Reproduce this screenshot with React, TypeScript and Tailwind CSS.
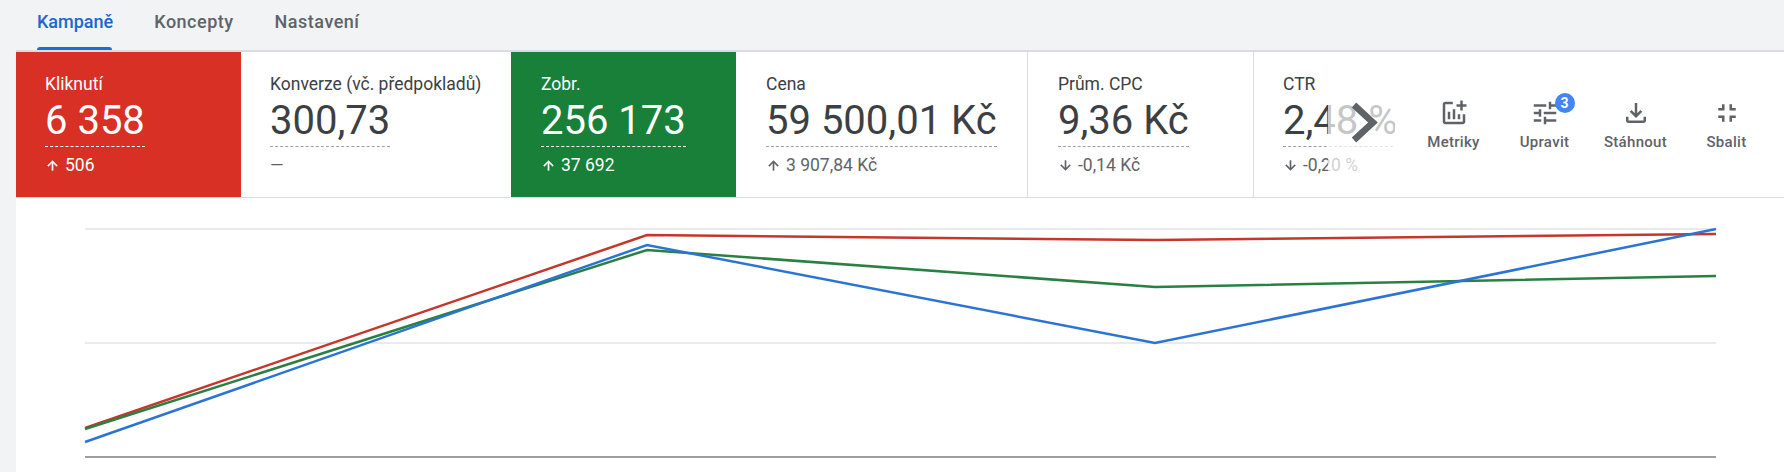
const UP = 'M4 12l1.41 1.41L11 7.83V20h2V7.83l5.58 5.59L20 12l-8-8-8 8z';
const DOWN = 'M20 12l-1.41-1.41L13 16.17V4h-2v12.17l-5.58-5.59L4 12l8 8 8-8z';

const CARDS = [
  { label: 'Kliknutí', value: '6 358', arrow: UP, sub: '506', width: 'w-[225px] pl-[29px]', tone: 'bg-[#d93025] text-white', line: 'border-white', subTone: 'text-white' },
  { label: 'Konverze (vč. předpokladů)', value: '300,73', arrow: '', sub: '—', width: 'w-[270px] pl-[29px]', tone: 'bg-white text-[#3c4043]', line: 'border-[#9aa0a6]', subTone: 'text-[#5f6368]' },
  { label: 'Zobr.', value: '256 173', arrow: UP, sub: '37 692', width: 'w-[225px] pl-[30px]', tone: 'bg-[#188038] text-white', line: 'border-white', subTone: 'text-white' },
  { label: 'Cena', value: '59 500,01 Kč', arrow: UP, sub: '3 907,84 Kč', width: 'w-[292px] pl-[30px] border-r border-[#dadce0]', tone: 'bg-white text-[#3c4043]', line: 'border-[#9aa0a6]', subTone: 'text-[#5f6368]' },
  { label: 'Prům. CPC', value: '9,36 Kč', arrow: DOWN, sub: '-0,14 Kč', width: 'w-[226px] pl-[30px] border-r border-[#dadce0]', tone: 'bg-white text-[#3c4043]', line: 'border-[#9aa0a6]', subTone: 'text-[#5f6368]' },
  { label: 'CTR', value: '2,48 %', arrow: DOWN, sub: '-0,20 %', width: 'flex-1 pl-[29px]', tone: 'bg-white text-[#3c4043]', line: 'border-[#9aa0a6]', subTone: 'text-[#5f6368]' },
];

const ACTIONS = [
  { label: 'Metriky', d: 'M22 5v2h-3v3h-2V7h-3V5h3V2h2v3h3zm-3 14H5V5h6V3H5c-1.1 0-2 .9-2 2v14c0 1.1.9 2 2 2h14c1.1 0 2-.9 2-2v-6h-2v6zm-4-6v4h2v-4h-2zm-4 4h2V9h-2v8zm-2 0v-6H7v6h2z' },
  { label: 'Upravit', d: 'M3 17v2h6v-2H3zM3 5v2h10V5H3zm10 16v-2h8v-2h-8v-2h-2v6h2zM7 9v2H3v2h4v2h2V9H7zm14 4v-2H11v2h10zm-6-4h2V7h4V5h-4V3h-2v6z', badge: '3' },
  { label: 'Stáhnout', d: 'M18 15v3H6v-3H4v3c0 1.1.9 2 2 2h12c1.1 0 2-.9 2-2v-3h-2zm-1-4l-1.41-1.41L13 12.17V4h-2v8.17L8.41 9.59 7 11l5 5 5-5z' },
  { label: 'Sbalit', d: 'M5 16h3v3h2v-5H5v2zm3-8H5v2h5V5H8v3zm6 11h2v-3h3v-2h-5v5zm2-11V5h-2v5h5V8h-3z' },
];

export default function App() {
  return (
    <div className="h-[472px] overflow-hidden bg-[#f1f3f4] pl-4 font-['Roboto',sans-serif]">
      {/* tabs */}
      <div className="flex h-[52px] gap-[41px] border-b-2 border-[#dadce0] pl-[21px] text-[18px] font-medium tracking-[0.5px] text-[#5f6368]">
        <div className="relative pt-[8px] tracking-normal text-[#1967d2]">
          Kampaně
          <div className="absolute bottom-0 left-0 h-[3px] w-[75px] rounded-t-[3px] bg-[#1a6fd4]" />
        </div>
        <div className="pt-[8px]">Koncepty</div>
        <div className="pt-[8px]">Nastavení</div>
      </div>

      {/* scorecards */}
      <div className="relative flex h-[146px] border-b border-[#dadce0] bg-white">
        {CARDS.map((c) => (
          <div key={c.label} className={`${c.width} ${c.tone} pt-[20px]`}>
            <div className="text-[17.5px] leading-6">{c.label}</div>
            <div className={`inline-block border-b border-dashed ${c.line} text-[40px] leading-[50px]`}>{c.value}</div>
            <div className={`mt-2 flex items-center text-[17.5px] leading-5 ${c.subTone}`}>
              {c.arrow && (
                <svg className="mr-[5px] h-[15px] w-[15px]" viewBox="0 0 24 24" fill="currentColor" stroke="currentColor" strokeWidth="0.6">
                  <path d={c.arrow} />
                </svg>
              )}
              {c.sub}
            </div>
          </div>
        ))}

        {/* fade and actions over the last card */}
        <div className="absolute inset-y-0 right-0 flex w-[456px] items-center">
          <div className="absolute inset-y-0 left-0 w-[67px] bg-white/70" />
          <div className="absolute inset-y-0 left-[67px] right-0 bg-white" />
          <svg className="absolute left-[22px] top-[50px] h-[42px] w-[32px]" viewBox="0 0 32 42">
            <path d="M4 3L23 20.5L4 38" fill="none" stroke="#5f6368" strokeWidth="6.5" />
          </svg>
          <div className="relative ml-[80px] flex">
            {ACTIONS.map((a) => (
              <div key={a.label} className="flex w-[91px] flex-col items-center text-[15px] font-medium leading-5 tracking-[0.3px] text-[#5f6368]">
                <div className="relative mb-[4px]">
                  <svg className="h-[30px] w-[30px]" viewBox="0 0 24 24" fill="#5f6368">
                    <path d={a.d} />
                  </svg>
                  {a.badge && (
                    <span className="absolute -right-[15px] -top-[5px] flex h-5 w-5 items-center justify-center rounded-full bg-[#4285f4] text-[14px] font-bold tracking-normal text-white">
                      {a.badge}
                    </span>
                  )}
                </div>
                {a.label}
              </div>
            ))}
          </div>
        </div>
      </div>

      {/* chart */}
      <div className="h-[274px] bg-white">
        <svg className="h-full w-full" viewBox="0 0 1768 274" fill="none">
          <path d="M69 31H1700M69 145H1700" stroke="#e8eaed" strokeWidth="2" />
          <path d="M69 259H1700" stroke="#9e9e9e" strokeWidth="2" />
          <path d="M69 230L631 37L1139 42L1700 36" stroke="#c5362c" strokeWidth="2.5" />
          <path d="M69 231L631 52L1139 89L1700 78" stroke="#2a8043" strokeWidth="2.5" />
          <path d="M69 244L631 47L1139 145L1700 31" stroke="#2b74d4" strokeWidth="2.5" />
        </svg>
      </div>
    </div>
  );
}
